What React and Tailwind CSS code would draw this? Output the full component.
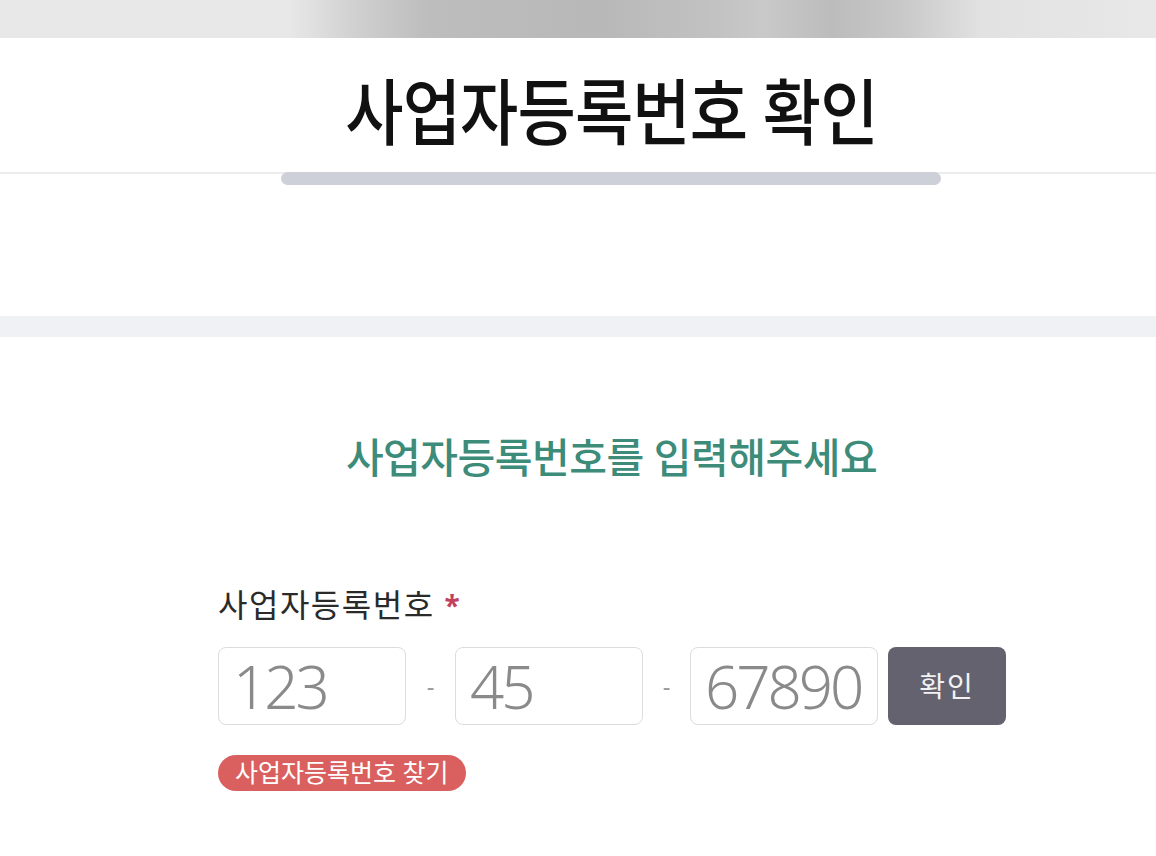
import React from "react";

const font = {
  fontFamily: '"Noto Sans", "Noto Sans CJK KR", sans-serif',
};

function NumberBox({ value }) {
  return (
    <div className="flex h-[78px] w-[188px] flex-none items-center rounded-[8px] border border-[#dcdcdc] bg-white pl-[14px]">
      <span className="text-[60px] font-light leading-[1.2] tracking-[-3px] text-[#8a8a8a]">{value}</span>
    </div>
  );
}

export default function App() {
  return (
    <div style={font} className="flex h-[856px] w-[1156px] flex-col overflow-hidden bg-white">
      <div className="h-[38px] bg-[linear-gradient(90deg,#e8e8e8_0%,#e8e8e8_25%,#cfcfcf_31%,#bdbdbd_37%,#b8b8b8_52%,#c2c2c2_62%,#c9c9c9_66%,#bcbcbc_72%,#c8c8c8_78%,#e2e2e2_85%,#e8e8e8_100%)]" />

      <div className="flex h-[134px] items-center justify-center pl-[67px] pt-[12px]">
        <h1 className="inline-block scale-x-[0.88] text-[72px] font-medium leading-none tracking-[-1px] text-[#111]">
          사업자등록번호 확인
        </h1>
      </div>

      <div className="relative h-[2px] bg-[#ededed]">
        <div className="absolute left-[281px] top-0 h-[13px] w-[660px] rounded-full bg-[#cdd0d9]" />
      </div>

      <div className="h-[142px]" />
      <div className="h-[21px] bg-[#f0f1f4]" />

      <div className="flex flex-col pl-[218px]">
        <p className="mt-[100px] pr-[151px] text-center text-[41px] font-medium leading-none tracking-[-0.5px] text-[#3d8b79]">
          사업자등록번호를 입력해주세요
        </p>

        <div className="mt-[111px] flex items-center gap-[10px]">
          <span className="text-[32px] leading-none tracking-[1.5px] text-[#2a2a2a]">사업자등록번호</span>
          <span className="text-[28px] font-bold leading-none text-[#c2405e]">*</span>
        </div>

        <div className="mt-[26px] flex items-center">
          <NumberBox value="123" />
          <span className="w-[49px] flex-none text-center text-[24px] text-[#9a9a9a]">-</span>
          <NumberBox value="45" />
          <span className="w-[47px] flex-none text-center text-[24px] text-[#9a9a9a]">-</span>
          <NumberBox value="67890" />
          <button className="ml-[10px] flex h-[78px] w-[118px] flex-none items-center justify-center rounded-[8px] bg-[#64626f] text-[28px] tracking-[2px] text-[#f2f2f2]">
            확인
          </button>
        </div>

        <div className="mt-[30px]">
          <span className="inline-flex h-[36px] items-center rounded-full bg-[#d9605f] px-[17px] text-[25px] tracking-[0px] text-white">
            사업자등록번호 찾기
          </span>
        </div>
      </div>
    </div>
  );
}
